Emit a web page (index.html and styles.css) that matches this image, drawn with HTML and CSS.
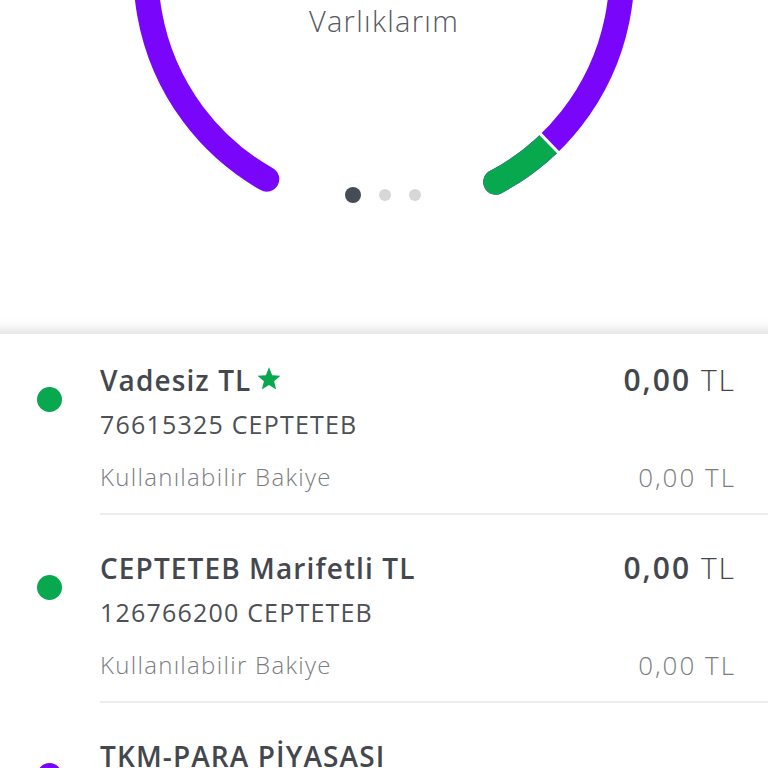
FILE: index.html
```html
<!DOCTYPE html>
<html lang="tr">
<head>
    <meta charset="UTF-8">
    <meta name="viewport" content="width=device-width, initial-scale=1.0">
    <title>Varlıklarım</title>
    <link rel="stylesheet" href="styles.css">
</head>
<body>

    <div class="hero">
        <!-- gauge ring, centre sits above the visible area -->
        <svg class="gauge" width="768" height="212" viewBox="0 0 768 212">
            <path d="M 266.8 179.2 A 238 238 0 1 1 495.7 182.1" fill="none" stroke="#7a05fb" stroke-width="25" stroke-linecap="round"/>
            <path d="M 549.3 143.2 A 238 238 0 0 1 495.7 182.1" fill="none" stroke="#07a84e" stroke-width="25"/>
            <circle cx="495.7" cy="182.1" r="12.5" fill="#07a84e"/>
            <line x1="538.9" y1="132.4" x2="559.8" y2="154" stroke="#fff" stroke-width="3"/>
        </svg>
        <h1 class="hero-title">Varlıklarım</h1>
        <div class="pager">
            <span class="pager-dot active"></span>
            <span class="pager-dot"></span>
            <span class="pager-dot"></span>
        </div>
    </div>

    <div class="shade"></div>

    <ul class="accounts">
        <li class="account">
            <span class="account-dot green"></span>
            <div class="account-body">
                <div class="account-head">
                    <span class="account-name">Vadesiz TL
                        <svg class="star" width="26" height="26" viewBox="0 0 24 24"><polygon points="12,1.2 14.9,8.5 22.6,9 16.7,14 18.6,21.7 12,17.5 5.4,21.7 7.3,14 1.4,9 9.1,8.5" fill="#07a84e"/></svg>
                    </span>
                    <span class="amount"><b>0,00</b> TL</span>
                </div>
                <div class="account-no">76615325 CEPTETEB</div>
                <div class="account-balance">
                    <span>Kullanılabilir Bakiye</span>
                    <span class="balance-value">0,00 TL</span>
                </div>
            </div>
        </li>
        <li class="account">
            <span class="account-dot green"></span>
            <div class="account-body">
                <div class="account-head">
                    <span class="account-name">CEPTETEB Marifetli TL</span>
                    <span class="amount"><b>0,00</b> TL</span>
                </div>
                <div class="account-no">126766200 CEPTETEB</div>
                <div class="account-balance">
                    <span>Kullanılabilir Bakiye</span>
                    <span class="balance-value">0,00 TL</span>
                </div>
            </div>
        </li>
        <li class="account">
            <span class="account-dot purple"></span>
            <div class="account-body">
                <div class="account-head">
                    <span class="account-name">TKM-PARA PİYASASI</span>
                </div>
            </div>
        </li>
    </ul>

</body>
</html>
```

FILE: styles.css
```css
body {
    margin: 0;
    padding: 0;
    font-family: "Open Sans", Lato, sans-serif;
    background-color: #fff;
    color: #43474d;
    overflow: hidden;
}

/* Gauge header */
.hero {
    position: relative;
    height: 318px;
}

.gauge {
    position: absolute;
    top: 0;
    left: 0;
}

.hero-title {
    position: relative;
    margin: 0;
    padding-top: 2px;
    text-align: center;
    font-size: 29px;
    font-weight: 300;
    letter-spacing: 1.3px;
    line-height: 38px;
    color: #55595e;
}

.pager {
    position: relative;
    display: flex;
    justify-content: center;
    align-items: center;
    gap: 18px;
    margin-top: 147px;
    padding-right: 2px;
}

.pager-dot {
    width: 12px;
    height: 12px;
    border-radius: 50%;
    background-color: #d7d7d7;
}

.pager-dot.active {
    width: 16px;
    height: 16px;
    background-color: #474d56;
}

.shade {
    height: 16px;
    background: linear-gradient(to bottom, #fff, #fbfbfb 40%, #e6e6e6);
}

/* Account list */
.accounts {
    list-style: none;
    margin: 0;
    padding: 0;
}

.account {
    display: flex;
    padding-top: 36px;
}

.account:first-child {
    padding-top: 29px;
}

.account-dot {
    flex: none;
    width: 25px;
    height: 25px;
    border-radius: 50%;
    margin: 24px 38px 0 37px;
}

.account-dot.green {
    background-color: #07a84e;
}

.account-dot.purple {
    background-color: #7a05fb;
}

.account-body {
    flex: 1;
    padding-right: 34px;
    padding-bottom: 19px;
    border-bottom: 2px solid #ececec;
}

.account-head {
    display: flex;
    justify-content: space-between;
    align-items: baseline;
    line-height: 34px;
}

.account-name {
    font-size: 28px;
    font-weight: 600;
    letter-spacing: 1.1px;
    color: #44484e;
}

.star {
    vertical-align: -1px;
    margin-left: -4px;
}

.amount {
    margin-right: -2px;
    font-size: 30px;
    font-weight: 300;
    letter-spacing: 2px;
    color: #43474d;
}

.amount b {
    font-weight: 600;
}

.account-no {
    margin-top: 10px;
    font-size: 25px;
    letter-spacing: 1.2px;
    line-height: 34px;
    color: #4d5055;
}

.account-balance {
    display: flex;
    justify-content: space-between;
    margin-top: 19px;
    font-size: 24px;
    font-weight: 300;
    letter-spacing: 1.3px;
    line-height: 34px;
    color: #7b7d80;
}

.balance-value {
    margin-right: -2px;
    font-size: 26px;
    letter-spacing: 2px;
}
```
